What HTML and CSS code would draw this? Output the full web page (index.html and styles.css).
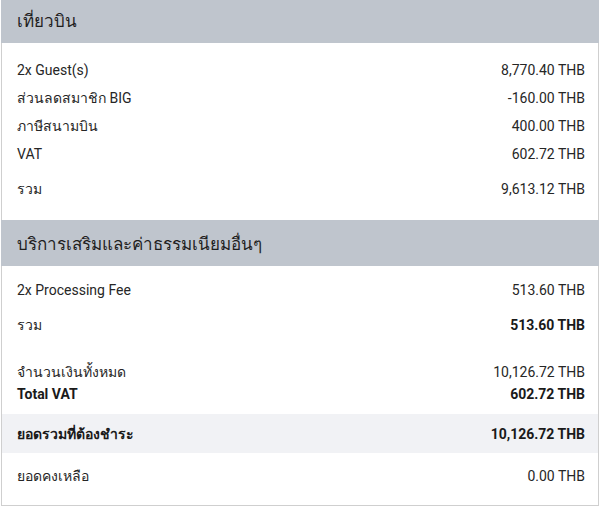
FILE: index.html
```html
<!DOCTYPE html>
<html lang="th">
<head>
<meta charset="utf-8">
<link rel="stylesheet" href="styles.css">
</head>
<body>
<div class="summary">
  <div class="section-head first">เที่ยวบิน</div>
  <div class="group">
    <div class="row"><span>2x Guest(s)</span><span>8,770.40 THB</span></div>
    <div class="row"><span>ส่วนลดสมาชิก BIG</span><span>-160.00 THB</span></div>
    <div class="row"><span>ภาษีสนามบิน</span><span>400.00 THB</span></div>
    <div class="row"><span>VAT</span><span>602.72 THB</span></div>
    <div class="row total"><span>รวม</span><span>9,613.12 THB</span></div>
  </div>
  <div class="section-head">บริการเสริมและค่าธรรมเนียมอื่นๆ</div>
  <div class="group">
    <div class="row"><span>2x Processing Fee</span><span>513.60 THB</span></div>
    <div class="row total"><span>รวม</span><span class="bold">513.60 THB</span></div>
  </div>
  <div class="grand">
    <div class="row tight"><span>จำนวนเงินทั้งหมด</span><span>10,126.72 THB</span></div>
    <div class="row tight bold"><span>Total VAT</span><span>602.72 THB</span></div>
  </div>
  <div class="row due bold"><span>ยอดรวมที่ต้องชำระ</span><span>10,126.72 THB</span></div>
  <div class="row balance"><span>ยอดคงเหลือ</span><span>0.00 THB</span></div>
</div>
</body>
</html>
```

FILE: styles.css
```css
html, body {
  margin: 0;
  padding: 0;
  background: #ffffff;
}
body {
  font-family: Roboto, "Noto Sans", "DejaVu Sans", sans-serif;
  font-size: 14px;
  color: #262626;
}
.summary {
  width: 598px;
  margin-left: 1px;
  border: 1px solid #cfcfcf;
  border-top: none;
  height: 506px;
  box-sizing: border-box;
}
.section-head {
  background: #bfc5cd;
  height: 46px;
  display: flex;
  align-items: center;
  padding-left: 16px;
  font-size: 17px;
  color: #1f1f1f;
  margin: 0 -1px;
}
.section-head.first {
  height: 43px;
  padding-bottom: 3px;
  box-sizing: border-box;
}
.group {
  padding: 13px 0 17px;
}
.group + .section-head + .group {
  padding: 10px 0 17px;
}
.row {
  display: flex;
  justify-content: space-between;
  align-items: center;
  height: 28px;
  padding: 0 13px 0 15px;
}
.row.total {
  margin-top: 7px;
}
.bold {
  font-weight: 700;
  color: #1a1a1a;
}
.grand {
  padding-top: 5px;
  padding-bottom: 9px;
}
.row.tight {
  height: 22px;
}
.row.due {
  background: #f1f2f5;
  height: 39px;
}
.row.balance {
  height: 28px;
  margin-top: 9px;
}
```
